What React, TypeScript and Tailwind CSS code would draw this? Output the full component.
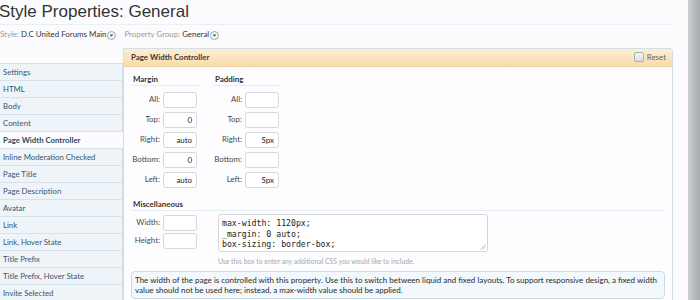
const navItems = [
  'Settings',
  'HTML',
  'Body',
  'Content',
  'Page Width Controller',
  'Inline Moderation Checked',
  'Page Title',
  'Page Description',
  'Avatar',
  'Link',
  'Link, Hover State',
  'Title Prefix',
  'Title Prefix, Hover State',
  'Invite Selected',
];

const margin = [
  { label: 'All:', value: '' },
  { label: 'Top:', value: '0' },
  { label: 'Right:', value: 'auto' },
  { label: 'Bottom:', value: '0' },
  { label: 'Left:', value: 'auto' },
];

const padding = [
  { label: 'All:', value: '' },
  { label: 'Top:', value: '' },
  { label: 'Right:', value: '5px' },
  { label: 'Bottom:', value: '' },
  { label: 'Left:', value: '5px' },
];

function DropIcon() {
  return (
    <svg width="9" height="9" viewBox="0 0 9 9" className="ml-[1px] shrink-0">
      <circle cx="4.5" cy="4.5" r="4" fill="#f4f6f8" stroke="#8a96a0" strokeWidth="0.8" />
      <path d="M2.6 3.6 L6.4 3.6 L4.5 5.8 Z" fill="#4a5660" />
    </svg>
  );
}

function BoxRow({ label, value }: { label: string; value: string }) {
  return (
    <div className="flex items-center h-[20px]">
      <span className="w-[32px] text-right pr-[3px] text-[#4a4a4a]">{label}</span>
      <div className="w-[34px] h-[16px] bg-white border border-[#d4d8dc] rounded-[3px] text-right pr-[4px] leading-[14px] text-[#222]">
        {value}
      </div>
    </div>
  );
}

function BoxGroup({ title, rows }: { title: string; rows: { label: string; value: string }[] }) {
  return (
    <div className="w-[69px]">
      <div className="font-bold text-[#333] pl-[2px] border-b border-[#e4edf2] leading-[12px] h-[13px]">{title}</div>
      <div className="pt-[4px]">
        {rows.map(r => (
          <BoxRow key={r.label} label={r.label} value={r.value} />
        ))}
      </div>
    </div>
  );
}

export default function App() {
  return (
    <div
      className="w-[700px] h-[300px] overflow-hidden flex bg-[#fcfcfe] text-[7.9px] text-[#333]"
      style={{ fontFamily: 'Lato, "Liberation Sans", Arial, sans-serif' }}
    >
      <div className="flex-1 min-w-0 flex flex-col pr-[15px]">
        <h1
          className="shrink-0 h-[24px] text-[17px] leading-[24px] text-[#333] -ml-[1px]"
          style={{ fontFamily: '"Liberation Sans", Arial, sans-serif' }}
        >
          Style Properties: General
        </h1>
        <div className="shrink-0 border-b border-[#e8f0f3]" />
        <div className="shrink-0 flex items-center h-[18px] mt-[1px]">
          <span className="text-[#999]">Style:</span>
          <span className="ml-[2px] text-[#333]">D.C United Forums Main</span>
          <DropIcon />
          <span className="ml-[8px] text-[#999]">Property Group:</span>
          <span className="ml-[2px] text-[#333]">General</span>
          <DropIcon />
        </div>

        <div className="shrink-0 flex items-start mt-[4px]">
          {/* side nav */}
          <div className="w-[123px] mt-[15px] shrink-0 border-t border-[#d6e2ea] text-[7.8px]">
            {navItems.map(item => {
              const active = item === 'Page Width Controller';
              return (
                <div
                  key={item}
                  className={`h-[17px] leading-[16px] pl-[3px] border-b border-[#d6e2ea] whitespace-nowrap ${
                    active
                      ? 'bg-[#fcfcfe] font-bold text-[#2e4a60]'
                      : 'bg-[#eef4f8] border-r border-r-[#d0dde6] text-[#3a5670]'
                  }`}
                >
                  {item}
                </div>
              );
            })}
          </div>

          {/* panel */}
          <div className="flex-1 border border-[#d3dfe7] rounded-tr-[3px] bg-[#fdfdff] h-[260px]">
            <div className="h-[18px] flex items-center justify-between pl-[7px] pr-[6px] bg-gradient-to-b from-[#fdeed6] to-[#f8dbab] border-b border-[#eccf9f]">
              <span className="font-bold text-[#3a3a3a]">Page Width Controller</span>
              <label className="flex items-center gap-[3px] text-[#666]">
                <span className="w-[10px] h-[10px] border border-[#a9b1b8] rounded-[2px] bg-gradient-to-b from-[#f4f4f4] to-[#dcdcdc]" />
                Reset
              </label>
            </div>

            <div className="pl-[7px] pr-[7px] pt-[6px]">
              <div className="flex gap-[13px]">
                <BoxGroup title="Margin" rows={margin} />
                <BoxGroup title="Padding" rows={padding} />
              </div>

              <div className="mt-[8px] font-bold text-[#333] pl-[2px] border-b border-[#e4edf2] leading-[12px] h-[13px]">
                Miscellaneous
              </div>

              <div className="flex mt-[3px]">
                <div className="flex flex-col">
                  <div className="flex items-center h-[18px]">
                    <span className="w-[32px] text-right pr-[3px] text-[#4a4a4a]">Width:</span>
                    <div className="w-[34px] h-[16px] bg-white border border-[#d4d8dc] rounded-[3px]" />
                  </div>
                  <div className="flex items-center h-[18px]">
                    <span className="w-[32px] text-right pr-[3px] text-[#4a4a4a]">Height:</span>
                    <div className="w-[34px] h-[16px] bg-white border border-[#d4d8dc] rounded-[3px]" />
                  </div>
                </div>
                <div className="ml-[21px] flex flex-col">
                  <div
                    className="relative w-[270px] h-[38px] bg-white border border-[#d4d8dc] rounded-[3px] px-[3px] pt-[3px] text-[8.2px] leading-[10.5px] text-[#1a1a1a]"
                    style={{ fontFamily: '"DejaVu Sans Mono", "Liberation Mono", monospace' }}
                  >
                    <div>max-width: 1120px;</div>
                    <div>_margin: 0 auto;</div>
                    <div>box-sizing: border-box;</div>
                    <svg width="6" height="6" viewBox="0 0 6 6" className="absolute right-[1px] bottom-[1px]">
                      <path d="M5.5 0.5 L0.5 5.5 M5.5 3 L3 5.5" stroke="#999" strokeWidth="0.7" />
                    </svg>
                  </div>
                  <div className="mt-[4px] text-[6.8px] text-[#a8a8a8]">Use this box to enter any additional CSS you would like to include.</div>
                </div>
              </div>

              <div className="mt-[5px] bg-[#f2f8fb] border border-[#c9dbe5] rounded-[4px] px-[3px] py-[3px] leading-[10px] text-[8px] text-[#2a2a2a]">
                The width of the page is controlled with this property. Use this to switch between liquid and fixed layouts. To support responsive design, a fixed width value should not be used here; instead, a max-width value should be applied.
              </div>
            </div>
          </div>
        </div>
      </div>
      <div className="w-[12px] h-full shrink-0 bg-gradient-to-r from-[#cdd0d4] via-[#b6babe] to-[#a9adb2]" />
    </div>
  );
}
